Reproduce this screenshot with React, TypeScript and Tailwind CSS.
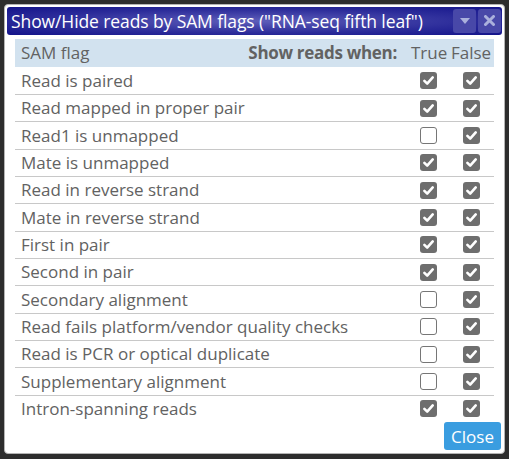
import React, { useState } from 'react';

const rows: { label: string; t: boolean; f: boolean }[] = [
    { label: 'Read is paired', t: true, f: true },
    { label: 'Read mapped in proper pair', t: true, f: true },
    { label: 'Read1 is unmapped', t: false, f: true },
    { label: 'Mate is unmapped', t: true, f: true },
    { label: 'Read in reverse strand', t: true, f: true },
    { label: 'Mate in reverse strand', t: true, f: true },
    { label: 'First in pair', t: true, f: true },
    { label: 'Second in pair', t: true, f: true },
    { label: 'Secondary alignment', t: false, f: true },
    { label: 'Read fails platform/vendor quality checks', t: false, f: true },
    { label: 'Read is PCR or optical duplicate', t: false, f: true },
    { label: 'Supplementary alignment', t: false, f: true },
    { label: 'Intron-spanning reads', t: true, f: true },
];

const Box: React.FC<{ checked: boolean; onClick: () => void }> = ({ checked, onClick }) => (
    <button
        onClick={onClick}
        className={`w-[17px] h-[17px] rounded-[3px] flex items-center justify-center ${
            checked ? 'bg-[#6e6e6e]' : 'bg-white border border-[#767676]'
        }`}
    >
        {checked && (
            <svg width="13" height="13" viewBox="0 0 12 12">
                <path d="M2.2 6.3 L4.8 8.9 L9.9 3.2" fill="none" stroke="white" strokeWidth="2.4" strokeLinecap="round" strokeLinejoin="round" />
            </svg>
        )}
    </button>
);

const App: React.FC = () => {
    const [flags, setFlags] = useState(rows);

    const toggle = (i: number, key: 't' | 'f') => {
        setFlags(flags.map((r, j) => (j === i ? { ...r, [key]: !r[key] } : r)));
    };

    return (
        <div className="w-[509px] h-[459px] bg-[#2d2d2d] p-1" style={{ fontFamily: '"Open Sans", sans-serif' }}>
            <div className="w-[501px] h-[450px] bg-white border border-[#b4b4b4] rounded-[4px] p-[2px] flex flex-col">
                {/* Title bar */}
                <div className="h-[28px] rounded-[3px] bg-[radial-gradient(ellipse_at_center,#5e5eba_0%,#2c2c9a_60%,#13138a_100%)] flex items-center pl-[4px] pr-[1px]">
                    <span className="text-white text-[17.5px] tracking-[-0.1px] flex-1 whitespace-nowrap">
                        Show/Hide reads by SAM flags ("RNA-seq fifth leaf")
                    </span>
                    <div className="flex gap-[2px]">
                        <div className="w-[23px] h-[24px] rounded-[3px] bg-[#4848a8] flex items-center justify-center">
                            <svg width="10" height="6" viewBox="0 0 10 6">
                                <path d="M0 0 L10 0 L5 6 Z" fill="#aab0dc" />
                            </svg>
                        </div>
                        <div className="w-[23px] h-[24px] rounded-[3px] bg-[#4848a8] flex items-center justify-center">
                            <svg width="11" height="11" viewBox="0 0 11 11">
                                <path d="M1.5 1.5 L9.5 9.5 M9.5 1.5 L1.5 9.5" stroke="#aab0dc" strokeWidth="3" strokeLinecap="round" />
                            </svg>
                        </div>
                    </div>
                </div>

                {/* Table */}
                <div className="mt-[4px] mx-[8px] text-[17px] text-[#626262]">
                    <div className="h-[28px] bg-[#d2e2ef] flex items-center pl-[6px]">
                        <span className="flex-1">SAM flag</span>
                        <span className="font-bold mr-[14px] tracking-[-0.3px]">Show reads when:</span>
                        <span className="w-[40px]">True</span>
                        <span className="w-[43px]">False</span>
                    </div>
                    {flags.map((r, i) => (
                        <div
                            key={r.label}
                            className={`h-[27.33px] flex items-center pl-[6px] ${i > 0 ? 'border-t border-[#c8c8c8]' : ''}`}
                        >
                            <span className="flex-1 whitespace-nowrap">{r.label}</span>
                            <div className="w-[43px] flex justify-center">
                                <Box checked={r.t} onClick={() => toggle(i, 't')} />
                            </div>
                            <div className="w-[43px] mr-[1px] flex justify-center">
                                <Box checked={r.f} onClick={() => toggle(i, 'f')} />
                            </div>
                        </div>
                    ))}
                </div>

                <div className="flex justify-end mt-auto mb-[1px] pr-[1px]">
                    <button className="w-[57px] h-[28px] rounded-[3px] bg-[#3a9de0] text-white text-[17px] leading-none">
                        Close
                    </button>
                </div>
            </div>
        </div>
    );
};

export default App;
